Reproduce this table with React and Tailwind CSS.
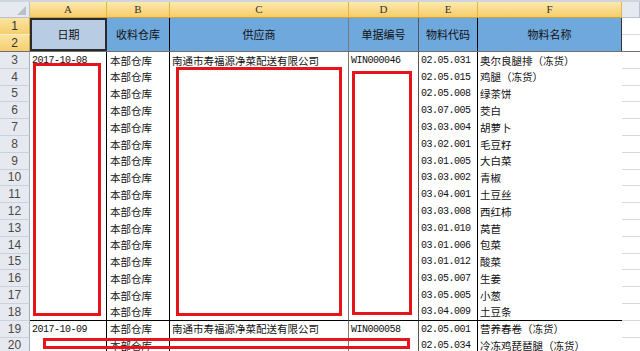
import React from "react";

const COLS = "grid grid-cols-[30px_77px_63px_179px_70px_59px_144px_18px]";
const CJK = "font-['Noto_Sans_CJK_SC','Noto_Sans',sans-serif]";
const MONO = "font-['Liberation_Mono','DejaVu_Sans_Mono',monospace]";
const NUM = "font-['Liberation_Sans',Arial,sans-serif]";
const LETTER = "font-['Liberation_Serif','DejaVu_Serif',serif]";

const SUP = "南通市寿福源净菜配送有限公司";

const rows = [
  { n: 3, date: "2017-10-08", b: "本部仓库", c: SUP, d: "WIN000046", e: "02.05.031", f: "奥尔良腿排（冻货）" },
  { n: 4, b: "本部仓库", e: "02.05.015", f: "鸡腿（冻货）" },
  { n: 5, b: "本部仓库", e: "02.05.008", f: "绿茶饼" },
  { n: 6, b: "本部仓库", e: "03.07.005", f: "茭白" },
  { n: 7, b: "本部仓库", e: "03.03.004", f: "胡萝卜" },
  { n: 8, b: "本部仓库", e: "03.02.001", f: "毛豆籽" },
  { n: 9, b: "本部仓库", e: "03.01.005", f: "大白菜" },
  { n: 10, b: "本部仓库", e: "03.03.002", f: "青椒" },
  { n: 11, b: "本部仓库", e: "03.04.001", f: "土豆丝" },
  { n: 12, b: "本部仓库", e: "03.03.008", f: "西红柿" },
  { n: 13, b: "本部仓库", e: "03.01.010", f: "莴苣" },
  { n: 14, b: "本部仓库", e: "03.01.006", f: "包菜" },
  { n: 15, b: "本部仓库", e: "03.01.012", f: "酸菜" },
  { n: 16, b: "本部仓库", e: "03.05.007", f: "生姜" },
  { n: 17, b: "本部仓库", e: "03.05.005", f: "小葱" },
  { n: 18, b: "本部仓库", e: "03.04.009", f: "土豆条", last: true },
  { n: 19, date: "2017-10-09", b: "本部仓库", c: SUP, d: "WIN000058", e: "02.05.001", f: "营养春卷（冻货）" },
  { n: 20, b: "本部仓库", e: "02.05.034", f: "冷冻鸡琵琶腿（冻货）" },
];

const cell = "flex items-center pt-[1px] text-[#111] leading-none whitespace-nowrap overflow-hidden";
const cjkText = `${cell} ${CJK} text-[10.5px]`;
const monoText = `${cell} ${MONO} text-[10px] tracking-[-0.5px]`;

function DataRow({ r }) {
  const bb = r.last ? "border-b border-b-black" : "";
  return (
    <div className={`${COLS} h-[16.8px] shrink-0`}>
      <div
        className={`bg-[#e6eaf0] border-r border-r-[#9eb0c6] border-b border-b-[#c9d1dc] flex items-center justify-center text-[12px] text-[#4a4a4a] leading-none ${NUM}`}
      >
        {r.n}
      </div>
      <div className={`border-r border-r-black ${bb} pl-[2px] ${monoText}`}>{r.date || ""}</div>
      <div className={`border-r border-r-black ${bb} pl-[3px] ${cjkText}`}>{r.b}</div>
      <div className={`border-r border-r-[#7a7a7a] ${bb} pl-[2px] ${cjkText}`}>{r.c || ""}</div>
      <div className={`border-r border-r-[#555] ${bb} pl-[2px] ${monoText}`}>{r.d || ""}</div>
      <div className={`border-r border-r-black ${bb} pl-[2px] ${monoText}`}>{r.e}</div>
      <div className={`${bb} pl-[2px] ${cjkText}`}>{r.f}</div>
      <div className="border-b border-b-[#d9d9d9]" />
    </div>
  );
}

function ColHead({ children, gold = true }) {
  return (
    <div
      className={`flex items-center justify-center text-[11px] text-[#333] leading-none border-r border-b ${LETTER} ${
        gold
          ? "bg-gradient-to-b from-[#fde9ad] to-[#f6cd66] border-r-[#e2b44e] border-b-[#c9a24a]"
          : "bg-[#e6eaf0] border-r-[#b7c2cf] border-b-[#b7c2cf]"
      }`}
    >
      {children}
    </div>
  );
}

const headBlue = `row-start-1 row-span-2 bg-[#6fa8dc] flex items-center justify-center text-[11px] text-[#111] ${CJK}`;
const rowHeadGold = `col-start-1 bg-gradient-to-b from-[#fbe3a0] to-[#f5cf6e] border-r border-r-[#c9a24a] flex items-center justify-center text-[12px] text-[#333] leading-none ${NUM}`;

export default function App() {
  return (
    <div className="relative w-[640px] h-[351px] overflow-hidden bg-white flex flex-col">
      <div className="h-[2px] bg-[#cfd5dd] shrink-0" />
      <div className={`${COLS} h-[16px] shrink-0`}>
        <div className="relative bg-[#e6eaf0] border-r border-r-[#b7c2cf] border-b border-b-[#b7c2cf]">
          <div className="absolute right-[3px] bottom-[2px] w-0 h-0 border-l-[9px] border-l-transparent border-b-[9px] border-b-[#b9c0ca]" />
        </div>
        <ColHead>A</ColHead>
        <ColHead>B</ColHead>
        <ColHead>C</ColHead>
        <ColHead>D</ColHead>
        <ColHead>E</ColHead>
        <ColHead>F</ColHead>
        <ColHead gold={false}>{""}</ColHead>
      </div>
      <div className={`${COLS} grid-rows-[16.5px_16.5px] shrink-0 border-b border-b-[#6f6f6f]`}>
        <div className={`${rowHeadGold} row-start-1 border-b border-b-[#fdf0c8]`}>1</div>
        <div className={`${rowHeadGold} row-start-2`}>2</div>
        <div className={`col-start-2 row-start-1 row-span-2 bg-[#b8cce4] border-2 border-[#2a2a2a] flex items-center justify-center text-[11px] text-[#111] ${CJK}`}>
          日期
        </div>
        <div className={`col-start-3 ${headBlue} border-r border-r-black`}>收料仓库</div>
        <div className={`col-start-4 ${headBlue} border-r border-r-[#7a7a7a]`}>供应商</div>
        <div className={`col-start-5 ${headBlue} border-r border-r-[#555]`}>单据编号</div>
        <div className={`col-start-6 ${headBlue} border-r border-r-black`}>物料代码</div>
        <div className={`col-start-7 ${headBlue} border-r border-r-[#333]`}>物料名称</div>
        <div className="col-start-8 row-start-1 border-b border-b-[#d9d9d9]" />
        <div className="col-start-8 row-start-2" />
      </div>
      {rows.map((r) => (
        <DataRow key={r.n} r={r} />
      ))}

      {/* red annotation boxes */}
      <div className="absolute left-[33px] top-[63px] w-[68px] h-[253px] border-[3px] border-[#e8141c]" />
      <div className="absolute left-[176px] top-[67px] w-[166px] h-[249px] border-[3px] border-[#e8141c]" />
      <div className="absolute left-[352px] top-[71px] w-[60px] h-[244px] border-[3px] border-[#e8141c]" />
      <div className="absolute left-[43px] top-[338px] w-[367px] h-[11px] border-[3px] border-[#e8141c]" />
    </div>
  );
}
